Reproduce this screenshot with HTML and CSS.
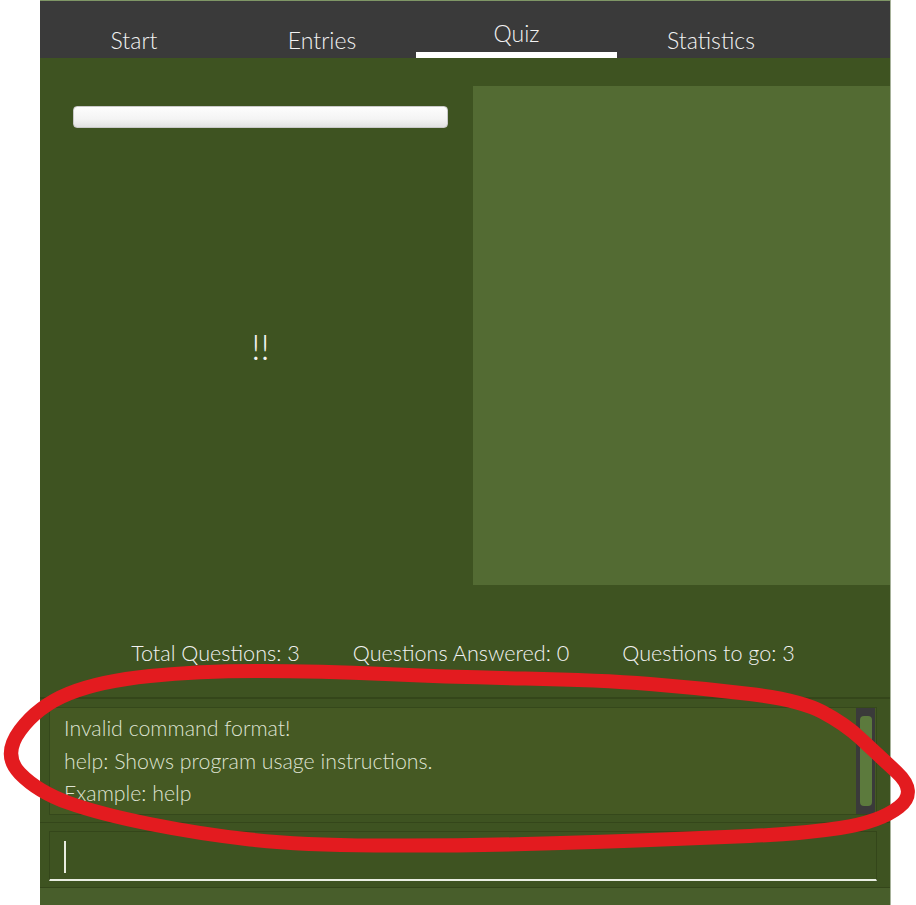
FILE: index.html
```html
<!DOCTYPE html>
<html>
<head>
<meta charset="utf-8">
<link rel="stylesheet" href="styles.css">
</head>
<body>
<div class="app">
  <div class="tabs">
    <div class="tab tab-start">Start</div>
    <div class="tab tab-entries">Entries</div>
    <div class="tab tab-quiz active">Quiz</div>
    <div class="tab tab-stats">Statistics</div>
  </div>
  <div class="main">
    <div class="quiz">
      <div class="left">
        <div class="progress"></div>
        <div class="question">!!</div>
      </div>
      <div class="right"></div>
    </div>
    <div class="stats">
      <span>Total Questions: 3</span>
      <span>Questions Answered: 0</span>
      <span>Questions to go: 3</span>
    </div>
  </div>
  <div class="console">
    <div class="result">
      <div class="result-text">
        <div>Invalid command format!</div>
        <div>help: Shows program usage instructions.</div>
        <div>Example: help</div>
      </div>
      <div class="scrollbar"><div class="thumb"></div></div>
    </div>
    <div class="sep"></div>
    <div class="command"><div class="caret"></div></div>
  </div>
  <div class="status"></div>
</div>
<svg class="annotation" width="916" height="905" viewBox="0 0 916 905">
  <path d="M20,730.5 Q38,706 69,693.5 Q100,681 150,676 Q200,671 260,671 Q320,671 385,674 Q450,677 525,678.5 Q600,680 650,684 Q700,688 750,694 Q800,700 822.5,712 Q845,724 860,738 Q875,752 896.5,772 Q918,792 899,807 Q880,822 840,828 Q800,834 750,836 Q700,838 650,840 Q600,842 525,844 Q450,846 375,845.5 Q300,845 250,839.5 Q200,834 150,824 Q100,814 69,803 Q38,792 20,773.5 Q2,755 20,730.5 Z" fill="none" stroke="#e31b1f" stroke-width="14" stroke-linejoin="round"/>
</svg>
</body>
</html>
```

FILE: styles.css
```css
html, body {
  margin: 0;
  padding: 0;
  background: #ffffff;
}
body {
  width: 916px;
  height: 905px;
  overflow: hidden;
  position: relative;
  font-family: "Lato", "Open Sans", sans-serif;
  font-weight: 300;
}
.app {
  margin-left: 40px;
  width: 850px;
  height: 905px;
  border-right: 1px solid #a7b29a;
  display: flex;
  flex-direction: column;
  background: #3e5321;
}
.tabs {
  height: 57px;
  border-top: 1px solid #7f9666;
  background: #3a3a3a;
  display: flex;
  color: #f2f2f2;
  font-size: 23px;
}
.tab {
  width: 188px;
  box-sizing: border-box;
  text-align: center;
  padding-top: 24px;
  line-height: 30px;
}
.tab.active {
  width: 201px;
  padding-top: 17px;
  border-bottom: 6px solid #ffffff;
  height: 57px;
}
.main {
  display: flex;
  flex-direction: column;
}
.quiz {
  display: flex;
  height: 527px;
}
.left {
  width: 433px;
  box-sizing: border-box;
  padding: 48px 25px 0 33px;
  display: flex;
  flex-direction: column;
}
.progress {
  height: 22px;
  box-sizing: border-box;
  border: 1px solid #c9c9c9;
  border-radius: 4px;
  background: linear-gradient(#fdfdfd, #f4f4f4 60%, #e2e2e2);
}
.question {
  flex: 1;
  display: flex;
  align-items: center;
  justify-content: center;
  color: #f4f4f4;
  font-size: 36px;
  padding-bottom: 22px;
}
.right {
  margin-top: 28px;
  width: 417px;
  background: #536b33;
}
.stats {
  height: 112px;
  box-sizing: border-box;
  padding-top: 54px;
  display: flex;
  justify-content: center;
  gap: 53px;
  color: #f2f2f2;
  font-size: 21.6px;
  line-height: 28px;
  padding-right: 4px;
}
.console {
  border-top: 2px solid #34461a;
  padding: 8px 13px 0 9px;
}
.result {
  position: relative;
  height: 108px;
  box-sizing: border-box;
  border: 1px solid #35481b;
  background: #455923;
}
.result-text {
  padding: 4px 0 0 14px;
  color: #dfe3d2;
  font-size: 21.3px;
  line-height: 32.5px;
}
.scrollbar {
  position: absolute;
  top: 0;
  right: 1px;
  bottom: 0;
  width: 19px;
  background: #3a3a3a;
  box-sizing: border-box;
  padding: 8px 3px 8px 4px;
}
.thumb {
  height: 100%;
  border-radius: 4px;
  background: #5c7a3d;
}
.sep {
  margin: 7px -13px 0 -9px;
  border-top: 1px solid #34461a;
  height: 8px;
}
.command {
  height: 50px;
  box-sizing: border-box;
  border: 1px solid #34461a;
  border-bottom: 2px solid #e9eee2;
  position: relative;
}
.caret {
  position: absolute;
  left: 14px;
  top: 9px;
  width: 2px;
  height: 32px;
  background: #e8ece0;
}
.status {
  margin-top: 6px;
  border-top: 1px solid #34461a;
  flex: 1;
  background: #485e2b;
}
.annotation {
  position: absolute;
  top: 0;
  left: 0;
  pointer-events: none;
}
```
